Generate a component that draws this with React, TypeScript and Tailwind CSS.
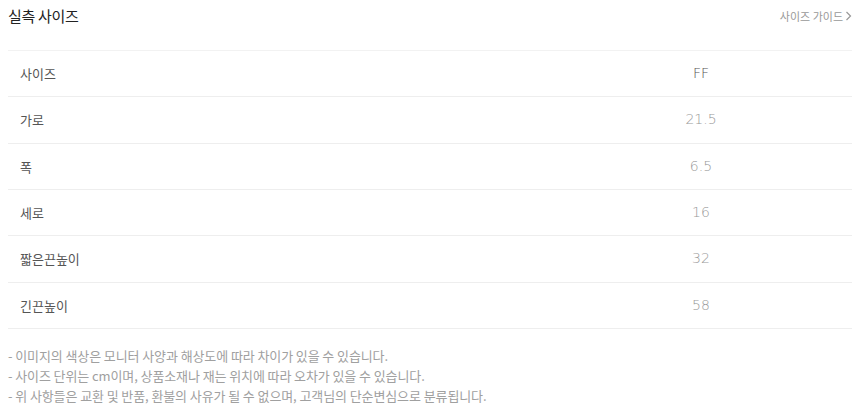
import React from "react";

const rows: [string, string][] = [
  ["사이즈", "FF"],
  ["가로", "21.5"],
  ["폭", "6.5"],
  ["세로", "16"],
  ["짧은끈높이", "32"],
  ["긴끈높이", "58"],
];

const kr = { fontFamily: '"Noto Sans CJK KR", "Noto Sans", sans-serif' };
const num = { fontFamily: '"DejaVu Sans", "Noto Sans CJK KR", sans-serif' };

export default function App() {
  return (
    <div className="w-[860px] h-[418px] bg-white px-[8px]" style={kr}>
      <div className="flex items-center justify-between h-[31px] pt-[1px]">
        <div className="text-[15px] text-[#222] tracking-[-0.3px]">실측 사이즈</div>
        <div className="flex items-center gap-[2px] text-[11px] text-[#999]">
          <span>사이즈 가이드</span>
          <svg width="7" height="10" viewBox="0 0 7 10" fill="none">
            <path d="M1.5 1l4 4-4 4" stroke="#999" strokeWidth="1.2" />
          </svg>
        </div>
      </div>
      <div className="mt-[19px] border-t border-[#f2f2f2]">
        {rows.map(([k, v], i) => (
          <div key={i} className="flex items-center h-[46.33px] border-b border-[#eeeeee]">
            <div className="w-[542px] pl-[12px] text-[13px] text-[#555]">{k}</div>
            <div
              className={`flex-1 text-center text-[14px] font-light ${i === 0 ? "text-[#555]" : "text-[#999]"}`}
              style={num}
            >
              {v}
            </div>
          </div>
        ))}
      </div>
      <div className="mt-[17px] text-[13px] leading-[20px] text-[#a0a0a0] tracking-[-0.1px]">
        <p>- 이미지의 색상은 모니터 사양과 해상도에 따라 차이가 있을 수 있습니다.</p>
        <p>- 사이즈 단위는 cm이며, 상품소재나 재는 위치에 따라 오차가 있을 수 있습니다.</p>
        <p>- 위 사항들은 교환 및 반품, 환불의 사유가 될 수 없으며, 고객님의 단순변심으로 분류됩니다.</p>
      </div>
    </div>
  );
}
